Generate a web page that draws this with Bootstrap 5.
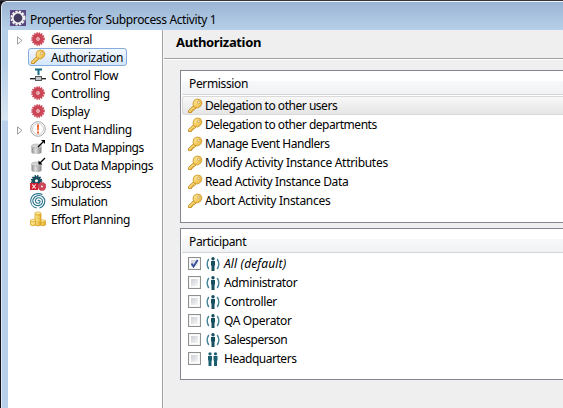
<!DOCTYPE html>
<html lang="en">
<head>
<meta charset="utf-8">
<title>Properties for Subprocess Activity 1</title>
<link href="https://cdn.jsdelivr.net/npm/bootstrap@5.3.0/dist/css/bootstrap.min.css" rel="stylesheet">
<style>
body{font:12px/18px "Noto Sans","Open Sans",sans-serif;letter-spacing:-.36px;color:#000;background:#15151a}
.win{width:563px;height:408px;border-top:1px solid #35333c}
.frame{margin-left:1px;border-left:1px solid #dfeaf5;border-top:1px solid #eef4fa;border-top-left-radius:6px;background:linear-gradient(#b5cfe8 60px,#d8e5f3 118px,#b8d0e9 119px);height:407px}
.titlebar{height:28px;padding:8px 0 0 8px;background:linear-gradient(#9ab5d3,#b7d0e9);border-top-left-radius:5px}
.titlebar svg{margin-right:4px;margin-top:-5px}
.client{margin-left:6px}
.tree{width:154px;background:#fff}
.tree-row{height:18px;padding-left:22px;position:relative;white-space:nowrap}
.tree-row span{padding-top:1px}
.tree-row svg.ic{margin-right:5px}
.arrow{position:absolute;left:9px;top:6px}
.sel{margin-left:20px;width:99px;padding-left:2px;border:1px solid #84acdd;border-radius:3px;background:linear-gradient(#f3f8fe,#d3e6fc)}
.sel svg.ic{margin-left:-1px}
.main{background:#efefef;border-left:1px solid #a0a0a0;box-shadow:inset 1px 0 #f8f8f8}
.heading{height:29px;border-bottom:1px solid #a0a0a0;font-size:13px;font-weight:700;padding:3px 0 0 12px;margin-left:1px;box-shadow:0 1px #fff}
.grid-box{margin:11px 0 0 17px;border:1px solid #828790;border-right:0;background:#fff;height:153px}
.grid-box + .grid-box{margin-top:5px;height:152px}
.grid-head{height:24px;margin-left:1px;padding:4px 0 0 7px;background:linear-gradient(#fff 10px,#f7f8fa 10px,#f1f2f4);border-bottom:1px solid #d5d5d5}
.item{height:19px;padding-left:6px}
.item span,.item em{padding-top:1px}
.item svg{margin-right:2px}
.item-first{margin-top:1px}
.grid-people .item svg{margin-right:3px}
.tight{letter-spacing:-.47px}
.loose{letter-spacing:-.29px}
.airy{letter-spacing:.12px}
.chosen{border:1px solid #d9d9d9;border-right:0;border-radius:3px 0 0 3px;margin-left:1px;padding-left:4px;background:linear-gradient(#f8f8f8,#e5e5e5)}
.form-check-input.cb{width:13px;height:13px;margin:0 4px 0 1px;border:1px solid #8e8f8f;border-radius:0;background:linear-gradient(135deg,#cbcfd5,#f6f6f6) content-box;padding:2px;box-shadow:inset 0 0 0 1px #f4f4f4;flex:none}
.form-check-input.cb:checked{background:url("data:image/svg+xml,%3Csvg xmlns='http://www.w3.org/2000/svg' viewBox='0 0 11 11'%3E%3Cpath d='M2.5 5.5l2 3L8.700 2' fill='none' stroke='%2339509c' stroke-width='1.900'/%3E%3C/svg%3E") center/11px no-repeat,linear-gradient(135deg,#cbcfd5,#f6f6f6) content-box}
</style>
</head>
<body class="overflow-hidden">
<svg class="position-absolute" width="0" height="0">
<defs>
<linearGradient id="gold" x1="0" y1="0" x2="1" y2="1"><stop stop-color="#fff0a8"/><stop offset="1" stop-color="#e8b130"/></linearGradient>
<linearGradient id="coin"><stop stop-color="#fbe68a"/><stop offset="1" stop-color="#dfa520"/></linearGradient>
<linearGradient id="steel"><stop stop-color="#8a8a8a"/><stop offset=".4" stop-color="#dedede"/><stop offset="1" stop-color="#858585"/></linearGradient>
</defs>
<symbol id="gear" viewBox="0 0 16 16"><circle cx="8" cy="8" r="5.800" fill="none" stroke="#cc4859" stroke-width="2" stroke-dasharray="1.400 .877"/><circle cx="8" cy="8" r="3.700" fill="none" stroke="#cb4657" stroke-width="4"/><circle cx="8" cy="8" r="1.500" fill="#e9a0a8"/></symbol>
<symbol id="key" viewBox="0 0 16 16"><path d="M7 7.300L1.500 12.500v2h3v-1.400h1.500v-1.500h1.500L9.200 9.600z" fill="url(#gold)" stroke="#c48a1c" stroke-width=".9"/><path d="M7 2.500L10 1l3.500.8L15 5l-1.500 3.300-3 1.700-3.500-1-1-3z" fill="url(#gold)" stroke="#cf9726" stroke-width=".9"/><circle cx="11.800" cy="4.200" r="1.200" fill="#fff" stroke="#c48a1c" stroke-width=".7"/></symbol>
<symbol id="flow" viewBox="0 0 16 16"><path d="M5 2.500h7M8.500 2v6" stroke="#176c85" stroke-width="2"/><path d="M0 11.500h16" stroke="#222"/><path d="M0 12.500h16" stroke="#aaa"/><rect x="5.500" y="9.500" width="6" height="4" fill="#c4c8ca" stroke="#555"/></symbol>
<symbol id="event" viewBox="0 0 16 16"><circle cx="8" cy="8" r="7.300" fill="#fff" stroke="#a5a5a5"/><circle cx="8" cy="8" r="5.500" fill="#fff" stroke="#c0c0c0" stroke-width=".8"/><path d="M7 3.500h2L8.700 9.500H7.300zM7 10.500h2v2H7z" fill="#ed5a20"/></symbol>
<symbol id="can" viewBox="0 0 16 16"><path d="M1.500 7v6.500c1 2 9 2 10 0V7z" fill="url(#steel)"/><ellipse cx="6.500" cy="7" rx="5" ry="2" fill="#d5d5d5" stroke="#aaa" stroke-width=".6"/></symbol>
<symbol id="subp" viewBox="0 0 16 16"><circle cx="6.500" cy="5.800" r="4.500" fill="none" stroke="#174e5e" stroke-width="2.500" stroke-dasharray="1.400 .95"/><circle cx="6.500" cy="5.800" r="3" fill="none" stroke="#174e5e" stroke-width="3"/><path d="M0 8h8v7H0z" fill="#d22030"/><path d="M2.200 9.500l3.600 4M5.800 9.500l-3.600 4" stroke="#fff" stroke-width="1.100"/><circle cx="12" cy="11.500" r="2.400" fill="none" stroke="#cb4657" stroke-width="3"/><circle cx="12" cy="11.500" r="3.700" fill="none" stroke="#cb4657" stroke-width="1.200" stroke-dasharray="1.200 .8"/></symbol>
<symbol id="spiral" viewBox="0 0 16 16"><path d="M8 8c.6-1.500 2.500-.5 2 1-.7 2-4.300 1.500-4.500-.8C5.300 5 8.500 4 10.800 5.400c3 2 1.700 6.800-2.300 7.200-4 .3-6.500-3-5.300-6.400C4.500 2.500 9.500 1.200 13 4c3.500 3.500 1.500 9.500-3.500 11M12.500 1.500C7-.8 1.500 1.500.8 7c-.4 4 2 7.300 6 8" fill="none" stroke="#27738c" stroke-width="1.100"/></symbol>
<symbol id="coins" viewBox="0 0 16 16"><path d="M5 2.500v11.500q3 2 6 0V2.500z" fill="url(#coin)" stroke="#d6a020" stroke-width=".8"/><path d="M.5 9.500v4.500q2.500 1.500 5 0V9.500zM10.500 10v4q2.500 1.500 5 0v-4z" fill="url(#coin)" stroke="#d6a020" stroke-width=".8"/><g fill="#fbe99c" stroke="#d6a020" stroke-width=".6"><ellipse cx="8" cy="2.300" rx="3" ry="1.400"/><ellipse cx="3" cy="9.500" rx="2.500" ry="1.200"/><ellipse cx="13" cy="10" rx="2.500" ry="1.200"/></g><path d="M6 6h4M6 9h4M1.500 12.500h3M11.500 13h3" stroke="#fae58b" stroke-width=".8"/></symbol>
<symbol id="person" viewBox="0 0 16 16"><path d="M3.800 3Q.5 8 3.800 13M12.200 3q3.300 5 0 10" fill="none" stroke="#438398" stroke-width="1.400"/><circle cx="8" cy="2.800" r="1.700" fill="#174f5f"/><path d="M6 5h4v4.500H9.500V15h-3V9.500H6z" fill="#174f5f"/></symbol>
<symbol id="people" viewBox="0 0 16 16"><g fill="#1b5e70"><circle cx="5" cy="2.800" r="1.600"/><circle cx="10.500" cy="2.800" r="1.600"/><path d="M3 5h4v4.500h-.5V15h-3V9.500H3zM8.500 5h4v4.500H12V15H9V9.500h-.5z"/></g></symbol>
<symbol id="tri" viewBox="0 0 6 9"><path d="M.5.8v7.400L5 4.500z" fill="#fff" stroke="#a0a0a0"/></symbol>
</svg>
<div class="win"><div class="frame d-flex flex-column">
<header class="titlebar d-flex align-items-center flex-shrink-0"><svg width="16" height="16" viewBox="0 0 16 16"><path d="M0 0h16v16H0z" fill="#5a4580"/><circle cx="8" cy="8" r="6.300" fill="none" stroke="#e8ecea" stroke-width="2.600" stroke-dasharray="2.200 1.100"/><circle cx="8" cy="8" r="5.200" fill="#433c60" stroke="#f4f4f1" stroke-width="1.600"/></svg><span>Properties for Subprocess Activity 1</span></header>
<div class="client d-flex flex-grow-1">
<nav class="tree flex-shrink-0">
<div class="tree-row d-flex align-items-center"><svg class="arrow" width="6" height="9"><use href="#tri"/></svg><svg class="ic" width="16" height="16"><use href="#gear"/></svg><span class="tight">General</span></div>
<div class="tree-row sel d-flex align-items-center"><svg class="ic" width="16" height="16"><use href="#key"/></svg><span>Authorization</span></div>
<div class="tree-row d-flex align-items-center"><svg class="ic" width="16" height="16"><use href="#flow"/></svg><span class="loose">Control Flow</span></div>
<div class="tree-row d-flex align-items-center"><svg class="ic" width="16" height="16"><use href="#gear"/></svg><span>Controlling</span></div>
<div class="tree-row d-flex align-items-center"><svg class="ic" width="16" height="16"><use href="#gear"/></svg><span>Display</span></div>
<div class="tree-row d-flex align-items-center"><svg class="arrow" width="6" height="9"><use href="#tri"/></svg><svg class="ic" width="16" height="16"><use href="#event"/></svg><span>Event Handling</span></div>
<div class="tree-row d-flex align-items-center"><svg class="ic" width="16" height="16"><use href="#can"/><path d="M8 8l5-5" stroke="#000" stroke-width="1.300"/><path d="M11 1h4v4z"/></svg><span class="tight">In Data Mappings</span></div>
<div class="tree-row d-flex align-items-center"><svg class="ic" width="16" height="16"><use href="#can"/><path d="M15 1l-5 5" stroke="#000" stroke-width="1.300"/><path d="M8.500 3.500v4h4z"/></svg><span class="tight">Out Data Mappings</span></div>
<div class="tree-row d-flex align-items-center"><svg class="ic" width="16" height="16"><use href="#subp"/></svg><span class="tight">Subprocess</span></div>
<div class="tree-row d-flex align-items-center"><svg class="ic" width="16" height="16"><use href="#spiral"/></svg><span>Simulation</span></div>
<div class="tree-row d-flex align-items-center"><svg class="ic" width="16" height="16"><use href="#coins"/></svg><span>Effort Planning</span></div>
</nav>
<main class="main flex-grow-1">
<h1 class="heading mb-0 lh-base">Authorization</h1>
<section class="grid-box">
<div class="grid-head">Permission</div>
<div class="item item-first chosen d-flex align-items-center"><svg width="16" height="16"><use href="#key"/></svg><span class="tight">Delegation to other users</span></div>
<div class="item d-flex align-items-center"><svg width="16" height="16"><use href="#key"/></svg><span class="tight">Delegation to other departments</span></div>
<div class="item d-flex align-items-center"><svg width="16" height="16"><use href="#key"/></svg><span class="tight">Manage Event Handlers</span></div>
<div class="item d-flex align-items-center"><svg width="16" height="16"><use href="#key"/></svg><span class="loose">Modify Activity Instance Attributes</span></div>
<div class="item d-flex align-items-center"><svg width="16" height="16"><use href="#key"/></svg><span>Read Activity Instance Data</span></div>
<div class="item d-flex align-items-center"><svg width="16" height="16"><use href="#key"/></svg><span class="loose">Abort Activity Instances</span></div>
</section>
<section class="grid-box grid-people">
<div class="grid-head">Participant</div>
<label class="item item-first d-flex align-items-center"><input class="form-check-input cb" type="checkbox" checked><svg width="16" height="16"><use href="#person"/></svg><em class="airy">All (default)</em></label>
<label class="item d-flex align-items-center"><input class="form-check-input cb" type="checkbox"><svg width="16" height="16"><use href="#person"/></svg><span>Administrator</span></label>
<label class="item d-flex align-items-center"><input class="form-check-input cb" type="checkbox"><svg width="16" height="16"><use href="#person"/></svg><span>Controller</span></label>
<label class="item d-flex align-items-center"><input class="form-check-input cb" type="checkbox"><svg width="16" height="16"><use href="#person"/></svg><span>QA Operator</span></label>
<label class="item d-flex align-items-center"><input class="form-check-input cb" type="checkbox"><svg width="16" height="16"><use href="#person"/></svg><span class="tight">Salesperson</span></label>
<label class="item d-flex align-items-center"><input class="form-check-input cb" type="checkbox"><svg width="16" height="16"><use href="#people"/></svg><span class="tight">Headquarters</span></label>
</section>
</main></div></div></div>
<script src="https://cdn.jsdelivr.net/npm/bootstrap@5.3.0/dist/js/bootstrap.bundle.min.js"></script>
</body></html>
